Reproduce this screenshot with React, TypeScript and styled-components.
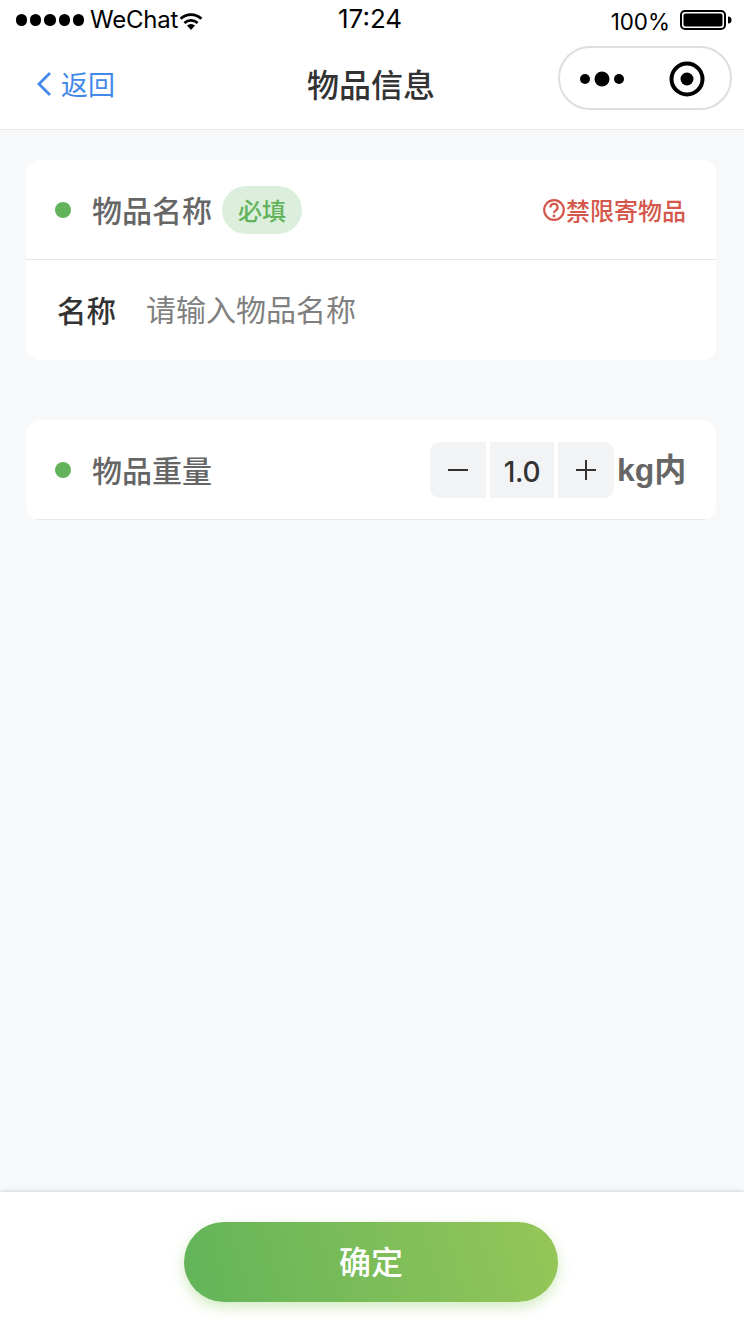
import React from "react";
import styled, { createGlobalStyle } from "styled-components";

const Global = createGlobalStyle`
  html, body { margin: 0; padding: 0; background: #f7f8fa; }
  * { box-sizing: border-box; }
  body { font-family: Inter, "Noto Sans CJK SC", sans-serif; }
`;
const Page = styled.div`
  width: 744px; height: 1332px; display: flex; flex-direction: column; overflow: hidden; background: #f7f8fa;
`;
const Header = styled.header`
  background: #fff; height: 130px; border-bottom: 1px solid #e9eaec; flex: none;
`;
const StatusBar = styled.div`
  height: 40px; display: grid; grid-template-columns: 1fr 1fr; position: relative; color: #000; padding: 0 12px 0 16px;
`;
const StatusLeft = styled.div`
  display: flex; align-items: center; font-size: 24px; height: 40px;
`;
const SignalDots = styled.div`
  display: flex; gap: 3px; margin-right: 6px;
`;
const SignalDot = styled.span`
  width: 11.2px; height: 11.2px; border-radius: 50%; background: #000;
`;
const Carrier = styled.span`
  line-height: 40px; letter-spacing: -0.2px;
`;
const Time = styled.span`
  position: absolute; left: 338px; top: 0; font-size: 26px; line-height: 38px; font-weight: 400;
`;
const StatusRight = styled.div`
  display: flex; align-items: center; justify-content: flex-end; height: 40px; gap: 10px; font-size: 22.4px; padding-top: 2px;
`;
const NavBar = styled.nav`
  height: 90px; position: relative; display: flex; align-items: center; justify-content: center;
`;
const Back = styled.div`
  position: absolute; left: 36px; top: 28px; display: flex; align-items: center; gap: 9px; color: #4389ea; font-size: 27px; line-height: 32px; font-family: "Noto Sans CJK SC", sans-serif;
`;
const Title = styled.h1`
  margin: 0 2px 4px 0; font-size: 32px; line-height: 40px; font-weight: 500; color: #333;
  font-family: "Noto Sans CJK SC", sans-serif;
`;
const Capsule = styled.div`
  position: absolute; left: 558px; top: 6px; width: 174px; height: 64px; border: 2px solid #dedede; border-radius: 32px; background: #fff;
  display: flex; align-items: center; justify-content: space-between; padding: 2px 25px 0 19px;
`;
const Main = styled.main`
  flex: 1; padding: 30px 28px 0 26px; display: flex; flex-direction: column; gap: 60px;
`;
const Card = styled.section`
  background: #fff; border-radius: 14px; overflow: hidden;
`;
const CardHead = styled.div`
  height: 100px; display: flex; align-items: center; padding: 0 31px 0 29px; border-bottom: 1px solid #e6e7e9;
`;
const Dot = styled.span`
  width: 16px; height: 16px; border-radius: 50%; background: #62b35b; flex: none; margin-right: 21px;
`;
const SectionTitle = styled.span`
  font-size: 30px; line-height: 40px; font-weight: 500; color: #666; font-family: "Noto Sans CJK SC", sans-serif; margin-top: -2px;
`;
const Badge = styled.span`
  width: 80px; height: 48px; border-radius: 24px; background: #dcefdc; color: #62b35b; margin-left: 10px; font-size: 24px; font-weight: 500;
  display: flex; align-items: center; justify-content: center; font-family: "Noto Sans CJK SC", sans-serif;
`;
const Forbidden = styled.div`
  margin-left: auto; display: flex; align-items: center; color: #d4574b; font-size: 24px; font-weight: 500; font-family: "Noto Sans CJK SC", sans-serif; line-height: 32px; margin-right: -1px;
`;
const InputRow = styled.div`
  height: 100px; display: flex; align-items: center; padding: 0 0 4px 31px;
`;
const FieldLabel = styled.span`
  font-size: 29.5px; font-weight: 500; color: #333; width: 89px; font-family: "Noto Sans CJK SC", sans-serif; margin-top: 2px;
`;
const Placeholder = styled.span`
  font-size: 30px; color: #808080; font-family: "Noto Sans CJK SC", sans-serif;
`;
const Stepper = styled.div`
  margin-left: auto; display: flex; gap: 4px; margin-right: 3px;
`;
const StepButton = styled.div<{ $side: "left" | "right" }>`
  width: 56px; height: 56px; background: #f2f3f5; display: flex; align-items: center; justify-content: center;
  border-radius: ${(p) => (p.$side === "left" ? "10px 0 0 10px" : "0 10px 10px 0")};
`;
const StepValue = styled.div`
  width: 64px; height: 56px; background: #f2f3f5; display: flex; align-items: center; justify-content: center; font-size: 28px; color: #333; font-weight: 500; padding-top: 5px; letter-spacing: -0.3px;
`;
const Unit = styled.span`
  font-size: 32px; font-weight: 600; color: #666; font-family: "Liberation Sans", "Noto Sans CJK SC", sans-serif; line-height: 40px;
  width: 68px; white-space: nowrap;
`;
const Footer = styled.footer`
  height: 140px; flex: none; background: #fff; box-shadow: 0 -1px 4px rgba(0,0,0,0.14); display: flex; justify-content: center; padding: 30px 0 0 0;
  position: relative;
`;
const Confirm = styled.button`
  width: 374px; height: 80px; border: 0; border-radius: 40px; color: #fff; font-size: 32px; font-weight: 500; font-family: "Noto Sans CJK SC", sans-serif;
  background: linear-gradient(75deg, #62b45a 0%, #96c658 100%); box-shadow: 0 5px 14px rgba(140, 205, 100, 0.4); padding: 0 0 5px; margin: 0 0 0 -2px;
`;

export default function App() {
  return (
    <Page>
      <Global />
      <Header>
        <StatusBar>
          <StatusLeft>
            <SignalDots>
              {[0, 1, 2, 3, 4].map((i) => <SignalDot key={i} />)}
            </SignalDots>
            <Carrier>WeChat</Carrier>
            <svg width="24" height="18" viewBox="0 0 24 18" style={{ marginLeft: 1, marginTop: 1 }}>
              <path d="M12 18 L8 13.6 A6 6 0 0 1 16 13.6 Z" fill="#000" />
              <path d="M5.4 11 A9.6 9.6 0 0 1 18.6 11" fill="none" stroke="#000" strokeWidth="2.6" />
              <path d="M1.6 6.8 A15 15 0 0 1 22.4 6.8" fill="none" stroke="#000" strokeWidth="2.6" />
            </svg>
          </StatusLeft>
          <Time>17:24</Time>
          <StatusRight>
            <span>100%</span>
            <svg width="52" height="20" viewBox="0 0 52 20" style={{ marginTop: -2 }}>
              <rect x="1" y="1" width="44" height="18" rx="4" fill="none" stroke="#000" strokeWidth="2" />
              <rect x="3.5" y="3.5" width="39" height="13" rx="2" fill="#000" />
              <path d="M48 6.5 a3.5 3.5 0 0 1 0 7 Z" fill="#000" />
            </svg>
          </StatusRight>
        </StatusBar>
        <NavBar>
          <Back>
            <svg width="16" height="26" viewBox="0 0 16 26">
              <path d="M14 2 L3 13 L14 24" fill="none" stroke="#4389ea" strokeWidth="2.8" />
            </svg>
            <span>返回</span>
          </Back>
          <Title>物品信息</Title>
          <Capsule>
            <svg width="46" height="18" viewBox="0 0 46 18">
              <circle cx="6" cy="9" r="5" fill="#000" />
              <circle cx="23" cy="9" r="7.5" fill="#000" />
              <circle cx="40" cy="9" r="5" fill="#000" />
            </svg>
            <svg width="36" height="36" viewBox="0 0 36 36">
              <circle cx="18" cy="18" r="15.5" fill="none" stroke="#000" strokeWidth="4" />
              <circle cx="18" cy="18" r="6.5" fill="#000" />
            </svg>
          </Capsule>
        </NavBar>
      </Header>
      <Main>
        <Card>
          <CardHead>
            <Dot />
            <SectionTitle>物品名称</SectionTitle>
            <Badge>必填</Badge>
            <Forbidden>
              <svg width="24" height="24" viewBox="0 0 24 24">
                <circle cx="12" cy="12" r="9.8" fill="none" stroke="#d4574b" strokeWidth="2.2" />
                <path d="M8.4 9.4 A3.6 3.6 0 1 1 13.6 12.6 C12.4 13.3 12 13.9 12 15" fill="none" stroke="#d4574b" strokeWidth="2.2" />
                <circle cx="12" cy="18" r="1.4" fill="#d4574b" />
              </svg>
              <span>禁限寄物品</span>
            </Forbidden>
          </CardHead>
          <InputRow>
            <FieldLabel>名称</FieldLabel>
            <Placeholder>请输入物品名称</Placeholder>
          </InputRow>
        </Card>
        <Card>
          <CardHead>
            <Dot />
            <SectionTitle>物品重量</SectionTitle>
            <Stepper>
              <StepButton $side="left">
                <svg width="20" height="4" viewBox="0 0 20 4"><path d="M0 2 H20" stroke="#333" strokeWidth="2" /></svg>
              </StepButton>
              <StepValue>1.0</StepValue>
              <StepButton $side="right">
                <svg width="20" height="20" viewBox="0 0 20 20"><path d="M0 10 H20 M10 0 V20" stroke="#333" strokeWidth="2" /></svg>
              </StepButton>
            </Stepper>
            <Unit>kg内</Unit>
          </CardHead>
        </Card>
      </Main>
      <Footer>
        <Confirm>确定</Confirm>
      </Footer>
    </Page>
  );
}
